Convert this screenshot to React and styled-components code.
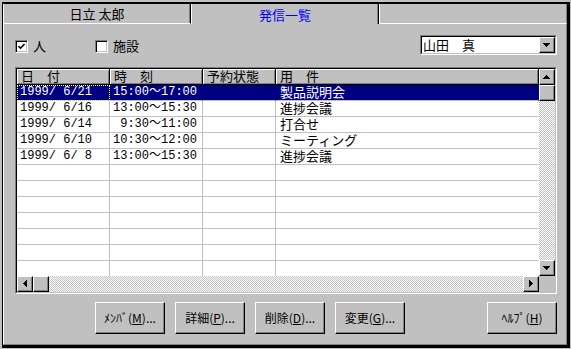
import React from 'react';
import styled, { createGlobalStyle, css } from 'styled-components';

const Global = createGlobalStyle`
  html, body { margin: 0; padding: 0; background: #c0c0c0; }
  body { font-family: "Noto Sans CJK JP", sans-serif; font-size: 13px; color: #000; }
  * { box-sizing: border-box; }
`;

const raised = css`
  background: #c0c0c0;
  border: 1px solid;
  border-color: #fff #000 #000 #fff;
  box-shadow: inset -1px -1px #808080;
`;

const Screen = styled.div`
  width: 571px;
  height: 349px;
  background: #c0c0c0;
  overflow: hidden;
  padding: 2px 0 0 2px;
`;

const Frame = styled.div`
  width: 568px;
  height: 346px;
  border-top: 2px solid #000;
  border-left: 1px solid #000;
  border-right: 3px solid #000;
  border-bottom: 3px solid #000;
  display: flex;
  flex-direction: column;
`;

const TabStrip = styled.div`
  display: flex;
  height: 20px;
`;

const Tab = styled.div`
  flex: 1;
  display: flex;
  align-items: center;
  justify-content: center;
  padding-top: 1px;
  border-left: 1px solid #fff;
  border-right: 1px solid ${p => (p.$last ? '#808080' : '#000')};
  box-shadow: ${p => (p.$last ? 'none' : 'inset -1px 0 #808080')};
  border-bottom: ${p => (p.$active ? 'none' : '1px solid #fff')};
  color: ${p => (p.$active ? '#0000ff' : '#000')};
  white-space: pre;
  line-height: 16px;
`;

const Panel = styled.div`
  flex: 1;
  border-left: 1px solid #fff;
  border-right: 1px solid #808080;
  border-bottom: 1px solid #808080;
  padding: 11px 9px 0 11px;
  display: flex;
  flex-direction: column;
`;

const OptionsRow = styled.div`
  display: flex;
  align-items: center;
  height: 20px;
`;

const CheckItem = styled.label`
  display: flex;
  align-items: center;
  gap: 5px;
  width: 80px;
  padding-top: 2px;
  line-height: 14px;
`;

const CheckBox = styled.span`
  width: 13px;
  height: 13px;
  display: flex;
  align-items: center;
  justify-content: center;
  background: #fff;
  border: 1px solid;
  border-color: #808080 #fff #fff #808080;
  box-shadow: inset 1px 1px #000, inset -1px -1px #c0c0c0;
`;

const Combo = styled.div`
  margin-left: auto;
  width: 137px;
  height: 20px;
  border: 1px solid;
  border-color: #808080 #fff #fff #808080;
  display: flex;
`;

const ComboInner = styled.div`
  flex: 1;
  display: flex;
  align-items: center;
  background: #fff;
  border: 1px solid;
  border-color: #000 #c0c0c0 #c0c0c0 #000;
`;

const ComboText = styled.span`
  flex: 1;
  padding-left: 1px;
  white-space: pre;
  line-height: 16px;
`;

const SmallButton = styled.div`
  ${raised}
  width: 16px;
  height: 16px;
  flex: none;
  display: flex;
  align-items: center;
  justify-content: center;
  padding-right: 1px;
  padding-bottom: 1px;
`;

const TableOuter = styled.div`
  margin-top: 12px;
  width: 542px;
  height: 227px;
  border: 1px solid;
  border-color: #808080 #fff #fff #808080;
`;

const TableInner = styled.div`
  width: 540px;
  height: 225px;
  border: 1px solid;
  border-color: #000 #c0c0c0 #c0c0c0 #000;
  display: grid;
  grid-template-columns: 522px 16px;
  grid-template-rows: 207px 16px;
  background: #fff;
`;

const List = styled.div`
  display: flex;
  flex-direction: column;
  overflow: hidden;
`;

const cols = '93px 93px 73px 263px';

const HeaderRow = styled.div`
  display: grid;
  grid-template-columns: ${cols};
  height: 16px;
  flex: none;
`;

const HeaderCell = styled.div`
  background: #c0c0c0;
  border-right: 1px solid #000;
  border-bottom: 1px solid #000;
  box-shadow: inset 1px 1px #fff, inset -1px -1px #808080;
  padding-left: 4px;
  line-height: 14px;
  white-space: pre;
`;

const Row = styled.div`
  display: grid;
  grid-template-columns: ${cols};
  height: 16px;
  flex: none;
  background: ${p => (p.$selected ? '#000080' : '#fff')};
  color: ${p => (p.$selected ? '#fff' : '#000')};
`;

const Cell = styled.div`
  border-right: 1px solid ${p => (p.$selected ? '#000080' : p.$last ? 'transparent' : '#c0c0c0')};
  border-bottom: 1px solid #c0c0c0;
  padding-left: ${p => (p.$jp ? '4px' : '3px')};
  font-family: ${p => (p.$jp ? '"Noto Sans CJK JP", sans-serif' : '"Liberation Mono", "Noto Sans CJK JP", monospace')};
  font-size: ${p => (p.$jp ? '13px' : '12px')};
  line-height: ${p => (p.$jp ? '13px' : '15px')};
  white-space: pre;
  ${p => p.$focus && css`
    outline: 1px dotted #ffff80;
    outline-offset: -1px;
  `}
`;

const VScroll = styled.div`
  display: flex;
  flex-direction: column;
`;

const HScroll = styled.div`
  display: flex;
`;

const Track = styled.div`
  flex: 1;
  background-color: #fff;
  background-image: repeating-conic-gradient(#c0c0c0 0% 25%, #fff 0% 50%);
  background-size: 2px 2px;
`;

const Thumb = styled.div`
  ${raised}
  width: 16px;
  height: 16px;
  flex: none;
`;

const Corner = styled.div`
  background: #c0c0c0;
`;

const ButtonRow = styled.div`
  margin-top: 8px;
  display: flex;
  gap: 10px;
  padding-left: 80px;
  height: 32px;
`;

const PushButton = styled.button`
  ${raised}
  width: 70px;
  height: 32px;
  padding: 0 0 1px 0;
  font-family: "Noto Sans CJK JP", sans-serif;
  font-size: 12px;
  color: #000;
  white-space: pre;
  margin-left: ${p => (p.$push ? 'auto' : '0')};
  u { text-decoration: underline; text-underline-offset: 1px; }
`;

const Arrow = ({ dir }) => {
  const horiz = dir === 'left' || dir === 'right';
  const w = horiz ? 4 : 7;
  const h = horiz ? 7 : 4;
  const pts = {
    up: '3.5,0 7,4 0,4',
    down: '0,0 7,0 3.5,4',
    left: '4,0 4,7 0,3.5',
    right: '0,0 4,3.5 0,7',
  }[dir];
  return (
    <svg width={w} height={h} viewBox={`0 0 ${w} ${h}`} shapeRendering="crispEdges">
      <polygon points={pts} fill="#000" />
    </svg>
  );
};

const Check = () => (
  <svg width="7" height="7" viewBox="0 0 7 7">
    <polyline points="0.5,3 2.5,5.2 6.5,1" fill="none" stroke="#000" strokeWidth="1.6" />
  </svg>
);

const rows = [
  ['1999/ 6/21', '15:00～17:00', '', '製品説明会'],
  ['1999/ 6/16', '13:00～15:30', '', '進捗会議'],
  ['1999/ 6/14', ' 9:30～11:00', '', '打合せ'],
  ['1999/ 6/10', '10:30～12:00', '', 'ミーティング'],
  ['1999/ 6/ 8', '13:00～15:30', '', '進捗会議'],
];

const blank = Array.from({ length: 7 }, () => ['', '', '', '']);

export default function App() {
  const all = [...rows, ...blank];
  return (
    <>
      <Global />
      <Screen>
        <Frame>
          <TabStrip>
            <Tab>日立 太郎</Tab>
            <Tab $active>発信一覧</Tab>
            <Tab $last />
          </TabStrip>
          <Panel>
            <OptionsRow>
              <CheckItem>
                <CheckBox><Check /></CheckBox>
                人
              </CheckItem>
              <CheckItem>
                <CheckBox />
                施設
              </CheckItem>
              <Combo>
                <ComboInner>
                  <ComboText>山田　真</ComboText>
                  <SmallButton><Arrow dir="down" /></SmallButton>
                </ComboInner>
              </Combo>
            </OptionsRow>
            <TableOuter>
              <TableInner>
                <List>
                  <HeaderRow>
                    <HeaderCell>日　付</HeaderCell>
                    <HeaderCell>時　刻</HeaderCell>
                    <HeaderCell>予約状態</HeaderCell>
                    <HeaderCell>用　件</HeaderCell>
                  </HeaderRow>
                  {all.map((r, i) => {
                    const sel = i === 0;
                    return (
                      <Row key={i} $selected={sel}>
                        <Cell $selected={sel} $focus={sel}>{r[0]}</Cell>
                        <Cell $selected={sel}>{r[1]}</Cell>
                        <Cell $selected={sel}>{r[2]}</Cell>
                        <Cell $selected={sel} $jp $last>{r[3]}</Cell>
                      </Row>
                    );
                  })}
                </List>
                <VScroll>
                  <SmallButton><Arrow dir="up" /></SmallButton>
                  <Thumb />
                  <Track />
                  <SmallButton><Arrow dir="down" /></SmallButton>
                </VScroll>
                <HScroll>
                  <SmallButton><Arrow dir="left" /></SmallButton>
                  <Thumb />
                  <Track />
                  <SmallButton><Arrow dir="right" /></SmallButton>
                </HScroll>
                <Corner />
              </TableInner>
            </TableOuter>
            <ButtonRow>
              <PushButton>ﾒﾝﾊﾞ(<u>M</u>)...</PushButton>
              <PushButton>詳細(<u>P</u>)...</PushButton>
              <PushButton>削除(<u>D</u>)...</PushButton>
              <PushButton>変更(<u>G</u>)...</PushButton>
              <PushButton $push>ﾍﾙﾌﾟ(<u>H</u>)</PushButton>
            </ButtonRow>
          </Panel>
        </Frame>
      </Screen>
    </>
  );
}
